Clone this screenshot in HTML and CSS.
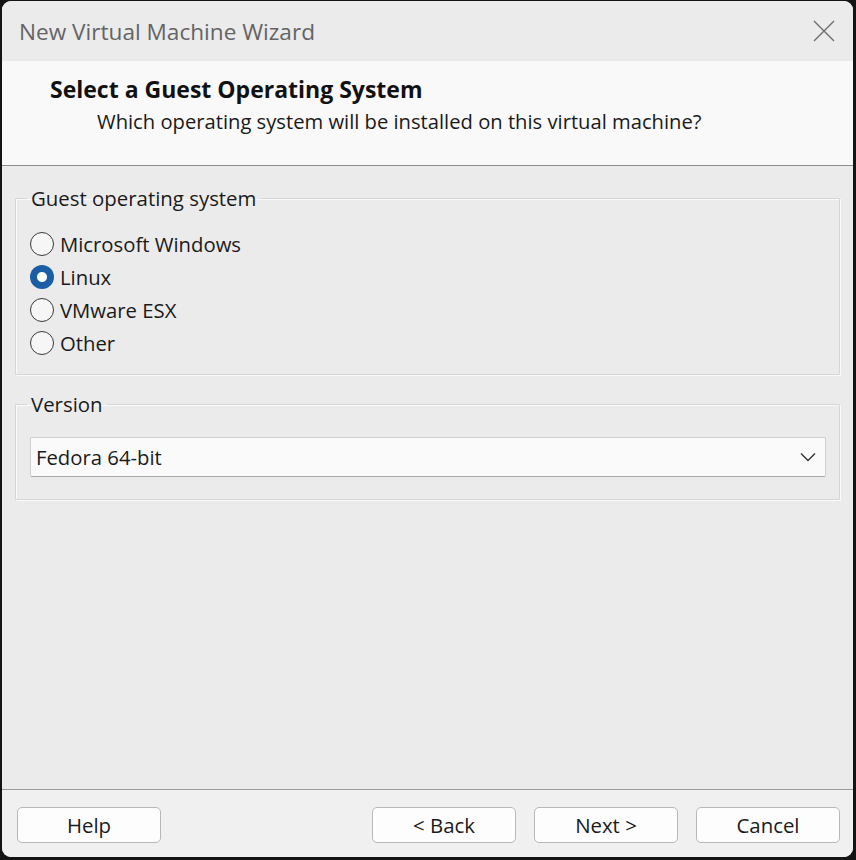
FILE: index.html
```html
<!DOCTYPE html>
<html>
<head>
<meta charset="utf-8">
<link rel="stylesheet" href="styles.css">
</head>
<body>
<div class="window">
  <div class="titlebar">
    <span class="title">New Virtual Machine Wizard</span>
    <span class="close">
      <svg width="22" height="22" viewBox="0 0 22 22"><path d="M1 1 L21 21 M21 1 L1 21" stroke="#6e6e6e" stroke-width="1.4" fill="none"/></svg>
    </span>
  </div>
  <div class="header">
    <div class="heading">Select a Guest Operating System</div>
    <div class="subheading">Which operating system will be installed on this virtual machine?</div>
  </div>
  <div class="content">
    <fieldset class="group group-os">
      <legend>Guest operating system</legend>
      <div class="radio-row"><span class="radio"></span><span class="label">Microsoft Windows</span></div>
      <div class="radio-row"><span class="radio checked"></span><span class="label">Linux</span></div>
      <div class="radio-row"><span class="radio"></span><span class="label">VMware ESX</span></div>
      <div class="radio-row"><span class="radio"></span><span class="label">Other</span></div>
    </fieldset>
    <fieldset class="group group-version">
      <legend>Version</legend>
      <div class="select">
        <span class="select-text">Fedora 64-bit</span>
        <svg width="16" height="10" viewBox="0 0 16 10"><path d="M1 1.5 L8 8.5 L15 1.5" stroke="#333" stroke-width="1.4" fill="none"/></svg>
      </div>
    </fieldset>
  </div>
  <div class="footer">
    <button class="btn">Help</button>
    <div class="spacer"></div>
    <button class="btn">&lt; Back</button>
    <button class="btn">Next &gt;</button>
    <button class="btn">Cancel</button>
  </div>
</div>
</body>
</html>
```

FILE: styles.css
```css
* { box-sizing: border-box; }
html, body { margin: 0; padding: 0; }
body {
  background: #141414;
  width: 856px;
  height: 860px;
  overflow: hidden;
  font-family: "Open Sans", "Noto Sans", sans-serif;
  color: #1a1a1a;
}
.window {
  margin: 1px 0 0 2px;
  width: 851px;
  height: 856px;
  background: #ebebeb;
  border-radius: 9px;
  overflow: hidden;
  display: flex;
  flex-direction: column;
}
.titlebar {
  height: 60px;
  flex: none;
  display: flex;
  align-items: center;
  justify-content: space-between;
  padding: 0 18px 0 17px;
  background: #ebebeb;
}
.title {
  font-size: 22.6px;
  color: #646464;
}
.close {
  display: flex;
  width: 22px;
  height: 22px;
}
.header {
  height: 105px;
  flex: none;
  background: #f9f9f9;
  border-bottom: 1px solid #8c8c8c;
  padding: 13px 0 0 48px;
}
.heading {
  font-size: 23px;
  font-weight: 700;
  color: #111;
  line-height: 30px;
}
.subheading {
  font-size: 20.2px;
  color: #1a1a1a;
  line-height: 28px;
  margin-top: 3px;
  padding-left: 47px;
}
.content {
  flex: 1;
  padding: 19px 13px 0 13px;
  background: #ebebeb;
}
.group {
  margin: 0;
  border: 1px solid #d6d6d6;
  box-shadow: inset 1px 1px 0 #fafafa, 1px 1px 0 #fafafa;
  border-radius: 1px;
  min-width: 0;
}
.group legend {
  font-size: 20.4px;
  line-height: 26px;
  padding: 0 4px;
  margin-left: -3px;
  color: #1a1a1a;
}
.group-os {
  padding: 16px 13px 15px 14px;
}
.radio-row {
  height: 33px;
  display: flex;
  align-items: center;
}
.radio {
  width: 24px;
  height: 24px;
  border-radius: 50%;
  border: 1.6px solid #3a3a3a;
  background: #f6f6f6;
  flex: none;
  margin-right: 6px;
}
.radio.checked {
  border: none;
  background: radial-gradient(circle, #ffffff 0 4.5px, #1b5ea6 5.5px);
}
.label {
  font-size: 20.3px;
}
.group-version {
  margin-top: 16px;
  padding: 20px 13px 22px 14px;
}
.select {
  height: 40px;
  background: #fafafa;
  border: 1px solid #cfcfcf;
  border-bottom-color: #a9a9a9;
  border-radius: 2px;
  display: flex;
  align-items: center;
  justify-content: space-between;
  padding: 0 9px 0 5px;
}
.select-text {
  font-size: 20.3px;
}
.footer {
  flex: none;
  height: 68px;
  border-top: 1px solid #9a9a9a;
  background: #f0f0f0;
  display: flex;
  align-items: flex-start;
  padding: 17px 13px 0 15px;
  gap: 18px;
}
.spacer { flex: 1; }
.btn {
  width: 144px;
  height: 36px;
  border: 1px solid #b8b8b8;
  border-radius: 5px;
  background: #fdfdfd;
  font-family: "Open Sans", "Noto Sans", sans-serif;
  font-size: 20.4px;
  color: #1a1a1a;
  padding: 0;
  line-height: 34px;
}
```
